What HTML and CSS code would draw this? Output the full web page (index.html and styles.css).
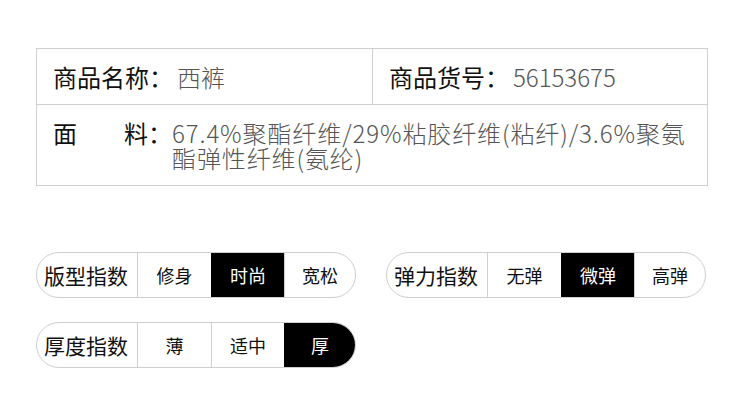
FILE: index.html
```html
<!DOCTYPE html>
<html lang="zh-CN">
<head>
<meta charset="utf-8">
<link rel="stylesheet" href="styles.css">
</head>
<body>
<div class="page">
  <div class="table">
    <div class="row row-top">
      <div class="cell"><span class="lbl">商品名称：</span><span class="val">西裤</span></div>
      <div class="cell cell-right"><span class="lbl">商品货号：</span><span class="val">56153675</span></div>
    </div>
    <div class="row row-mat">
      <div class="mat-label"><span class="mat-split"><span>面</span><span>料</span></span><span class="colon">：</span></div>
      <div class="val mat-val">67.4%聚酯纤维/29%粘胶纤维(粘纤)/3.6%聚氨酯弹性纤维(氨纶)</div>
    </div>
  </div>

  <div class="pills">
    <div class="pill">
      <div class="seg seg-label">版型指数</div>
      <div class="seg">修身</div>
      <div class="seg active">时尚</div>
      <div class="seg">宽松</div>
    </div>
    <div class="pill">
      <div class="seg seg-label">弹力指数</div>
      <div class="seg">无弹</div>
      <div class="seg active">微弹</div>
      <div class="seg">高弹</div>
    </div>
    <div class="pill">
      <div class="seg seg-label">厚度指数</div>
      <div class="seg">薄</div>
      <div class="seg">适中</div>
      <div class="seg active">厚</div>
    </div>
  </div>
</div>
</body>
</html>
```

FILE: styles.css
```css
html, body {
  margin: 0;
  padding: 0;
  background: #fff;
}
body {
  font-family: "Noto Sans CJK SC", "Noto Sans", sans-serif;
  color: #111;
  text-spacing-trim: space-all;
}
.page {
  padding: 48px 42px 0 36px;
}
.table {
  width: 672px;
  border: 1px solid #cfcfcf;
  box-sizing: border-box;
}
.row-top {
  display: grid;
  grid-template-columns: 1fr 1fr;
  height: 55px;
  border-bottom: 1px solid #cfcfcf;
}
.cell {
  display: flex;
  align-items: center;
  padding-left: 16px;
  font-size: 24px;
  line-height: 1;
}
.cell-right {
  border-left: 1px solid #cfcfcf;
}
.lbl {
  font-weight: 400;
  color: #111;
  margin-right: 4px;
}
.val {
  font-weight: 300;
  color: #555;
}
.row-mat {
  display: flex;
  padding: 15px 16px 15px 16px;
  font-size: 24px;
  line-height: 25px;
  height: 50px;
}
.mat-label {
  display: flex;
  flex: none;
  width: 119px;
  font-weight: 400;
}
.mat-split {
  display: flex;
  justify-content: space-between;
  width: 95px;
}
.colon {
  width: 24px;
}
.mat-val {
  flex: 1;
  letter-spacing: 0.9px;
}
.pills {
  display: grid;
  grid-template-columns: 320px 320px;
  column-gap: 30px;
  row-gap: 24px;
  margin-top: 66px;
}
.pill {
  display: grid;
  grid-template-columns: 100px 74px 73px 1fr;
  height: 46px;
  border: 1px solid #cfcfcf;
  border-radius: 23px;
  overflow: hidden;
  box-sizing: border-box;
}
.seg {
  display: flex;
  align-items: center;
  justify-content: center;
  font-size: 18px;
  color: #111;
  border-left: 1px solid #cfcfcf;
}
.seg-label {
  border-left: none;
  font-size: 21px;
  padding-right: 2px;
}
.seg.active {
  background: #000;
  color: #fff;
  border-left-color: #000;
}
```
